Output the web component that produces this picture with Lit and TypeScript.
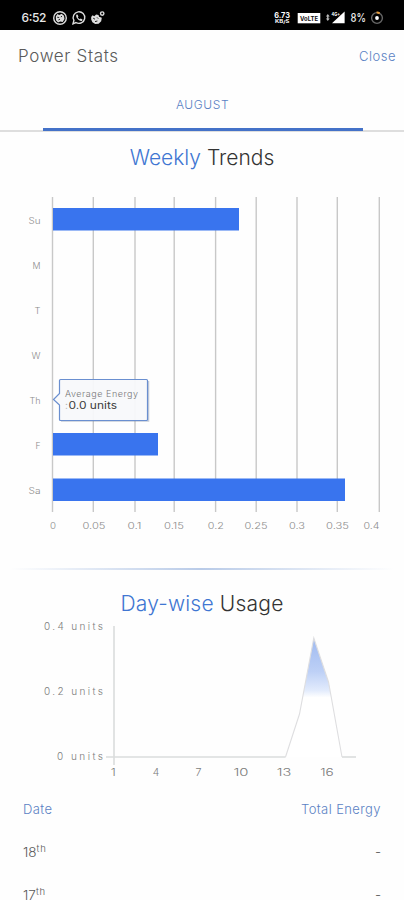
import { LitElement, html, svg, css } from "lit";
import { customElement } from "lit/decorators.js";

const GRID = [52.5, 93.3, 135, 174.2, 215.6, 256.2, 297, 337.3, 379.3];
const TICKS: [string, number, number][] = [
  ["0", 53, 6], ["0.05", 94, 23], ["0.1", 134.5, 14], ["0.15", 174, 20], ["0.2", 215.8, 16],
  ["0.25", 256, 23], ["0.3", 297, 16], ["0.35", 337.5, 23], ["0.4", 371.5, 16],
];
const DAYS: [string, number, number, number][] = [
  ["Su", 219.5, 186, 12], ["M", 264.5, 0, 8], ["T", 309.5, 0, 6], ["W", 354.5, 0, 9],
  ["Th", 399.5, 0, 11], ["F", 444.5, 105, 5], ["Sa", 490, 292, 12],
];

@customElement("status-bar")
class StatusBar extends LitElement {
  static styles = css`
    :host { display: block; height: 30px; background: #000; }
    svg { display: block; font-family: Inter, "Liberation Sans", sans-serif; fill: #fff; }
    .clock { font-size: 12px; font-weight: 500; fill: #e8e8e8; }
    .rate { font-size: 8px; font-weight: 700; }
    .unit { font-size: 4.5px; font-weight: 700; }
    .volte { font-size: 6.5px; font-weight: 700; fill: #111; }
    .net { font-size: 5px; font-weight: 700; }
  `;
  render() {
    return html`<svg width="404" height="30" viewBox="0 0 404 30">
      <text class="clock" x="21.5" y="22" textLength="25">6:52</text>
      <g fill="none" stroke="#ddd" stroke-width="1.4">
        <circle cx="60" cy="18" r="6.3" />
        <path d="M73 23.8l.9-3.4a5.8 5.8 0 1 1 2 2.1z" />
        <circle cx="102.2" cy="13.6" r="1.7" />
      </g>
      <path d="M55.8 16.5l1.6-2.4 1.8.9 2.4-1.2 2.4 2 .5 3.2-1.8 3-2.5-.4-2.2.8-2-2.2z" fill="#ddd" />
      <path d="M57.2 17.2l2 .3m1.6-.6l1.2-.6M58.4 20l1.6-.8" stroke="#222" fill="none" />
      <path d="M76.2 14.8l1.3-.3.9 2-.6.9c.5.9 1.1 1.4 2 1.8l.9-.8 1.8 1-.3 1.3c-2.5 1.3-6.6-2.7-6-5.9z" fill="#ddd" />
      <path d="M91.2 17l1.3-1.7 1.8 1 1.8-1.8 2.4.6.6 1.6 2.7 1.1-.6 3.4-2.6 2.6-3.4.3-2.8-1.8-1.2-2.8z" fill="#ddd" />
      <path d="M93.2 18.2l1.8 1m2-1.8l1.2 1.2M95 21.6l2.4-.6" stroke="#222" fill="none" />
      <text class="rate" x="274.3" y="17.6" textLength="15.7" lengthAdjust="spacingAndGlyphs">6.73</text>
      <text class="unit" x="275" y="22.8" textLength="14.5" lengthAdjust="spacingAndGlyphs">KB/S</text>
      <rect x="297.7" y="13" width="22.6" height="10.3" />
      <text class="volte" x="300" y="20.7" textLength="18" lengthAdjust="spacingAndGlyphs">VoLTE</text>
      <path d="M327.8 14l1.9 2.4h-1.2v2.2h1.2l-1.9 2.4-1.9-2.4h1.2v-2.2h-1.2z" fill="#bbb" />
      <text class="net" x="331.5" y="16" textLength="8.5" lengthAdjust="spacingAndGlyphs">4G+</text>
      <path d="M332 23.2L344.6 11.5V23.2z" />
      <text class="clock" x="350.5" y="22" textLength="15.5" lengthAdjust="spacingAndGlyphs">8%</text>
      <circle cx="377" cy="18" r="5.4" fill="none" stroke="#666" stroke-width="1.4" />
      <path d="M376.6 12.6a5.4 5.4 0 0 1 3.1.7" fill="none" stroke="#e59a3a" stroke-width="2" />
      <circle cx="377" cy="18" r="1.9" />
    </svg>`;
  }
}

@customElement("weekly-chart")
class WeeklyChart extends LitElement {
  static styles = css`
    :host { display: block; height: 370px; }
    svg { display: block; font-family: Inter, "Liberation Sans", sans-serif; }
    .grid { stroke: #c8c8c8; stroke-width: 1.4; }
    .bar { fill: #3974ee; }
    .label { font-size: 9px; font-weight: 300; fill: #8c8c8c; }
    .tip { fill: #f8f9fb; fill-opacity: .94; stroke: #6a8fd0; stroke-width: 1.2; }
    .shade { fill: none; stroke: #8290a8; stroke-opacity: .45; stroke-width: 1.3; }
    .name { font-size: 9px; font-weight: 300; fill: #777; }
    .value { font-size: 10px; font-weight: 400; fill: #3c3c3c; }
    .faint { fill: #b5b5b5; }
  `;
  render() {
    return html`<svg width="404" height="370" viewBox="0 180 404 370">
      ${GRID.map((x) => svg`<line class="grid" x1=${x} x2=${x} y1="197" y2="512" />`)}
      ${DAYS.map(([d, y, w, len]) => svg`
        <text class="label" x=${40.5 - len} y=${y + 4} textLength=${len} lengthAdjust="spacingAndGlyphs">${d}</text>
        ${w ? svg`<rect class="bar" x="53" y=${y - 11.5} width=${w} height="22.5" />` : null}`)}
      ${TICKS.map(([t, x, w]) => svg`<text class="label" x=${x - w / 2} y="529" textLength=${w} lengthAdjust="spacingAndGlyphs">${t}</text>`)}
      <path class="shade" d="M148.6 381V421.2H61" />
      <path class="tip" d="M60.5 379.5H146.5Q147.5 379.5 147.5 380.5V419.5Q147.5 420.5 146.5 420.5H60.5Q59.5 420.5 59.5 419.5V405L53.5 399.5L59.5 393.5V380.5Q59.5 379.5 60.5 379.5Z" />
      <text class="name" x="65" y="396.5" textLength="73">Average Energy</text>
      <text class="value faint" x="65" y="409.3">:</text>
      <text class="value" x="68.5" y="409.3" textLength="48.5" lengthAdjust="spacingAndGlyphs">0.0 units</text>
    </svg>`;
  }
}

@customElement("daily-chart")
class DailyChart extends LitElement {
  static styles = css`
    :host { display: block; height: 165px; }
    svg { display: block; font-family: Inter, "Liberation Sans", sans-serif; }
    .axis { stroke: #dadcdc; stroke-width: 1.6; }
    .label { font-size: 10px; font-weight: 300; fill: #7c7c7c; }
    .line { fill: none; stroke: #dedee0; stroke-width: 1.1; }
  `;
  render() {
    const ys: [string, number, number, number][] = [
      ["0.4 units", 629.5, 44, 59], ["0.2 units", 695, 44, 59], ["0 units", 760, 57, 46],
    ];
    const xs: [string, number, number][] = [
      ["1", 113.3, 5], ["4", 156, 6.5], ["7", 198.5, 6], ["10", 241, 15], ["13", 284, 14.5], ["16", 327, 13.5],
    ];
    return html`<svg width="404" height="165" viewBox="0 619 404 165">
      <defs><linearGradient id="fade" x1="0" y1="0" x2="0" y2="1">
        <stop offset="0" stop-color="#9fbaf0" /><stop offset=".28" stop-color="#bdd0f6" />
        <stop offset=".44" stop-color="#e2ebfc" /><stop offset=".5" stop-color="#fff" />
      </linearGradient></defs>
      <line class="axis" x1="114" x2="114" y1="626" y2="765" />
      <line class="axis" x1="106" x2="285.5" y1="757" y2="757" />
      <line class="axis" x1="342" x2="356" y1="757" y2="757" />
      <path fill="url(#fade)" d="M285.5 757L299.5 714L313.8 638L328.5 682L342 757Z" />
      <path class="line" d="M285.5 757L299.5 714L313.8 638L328.5 682L342 757" />
      ${ys.map(([t, y, x, w]) => svg`<text class="label" x=${x} y=${y} textLength=${w}>${t}</text>`)}
      ${xs.map(([t, x, w]) => svg`<text class="label" x=${x - w / 2} y="775.5" textLength=${w} lengthAdjust="spacingAndGlyphs">${t}</text>`)}
    </svg>`;
  }
}

@customElement("app-root")
class AppRoot extends LitElement {
  static styles = css`
    :host { display: block; height: 900px; overflow: hidden; background: #fefefe;
      font-family: Inter, "Liberation Sans", sans-serif; color: #5a5a5a; }
    .header { height: 52px; display: flex; align-items: center; justify-content: space-between;
      padding: 0 8px 0 18px; box-sizing: border-box; }
    .title { font-size: 17px; font-weight: 300; letter-spacing: .65px; }
    .close { font-size: 13px; font-weight: 300; letter-spacing: .5px; color: #5b82c4; }
    .tabs { height: 50px; display: flex; justify-content: center; box-sizing: border-box;
      padding-left: 1px; border-bottom: 2px solid #dedede; }
    .tab { width: 320px; height: 49px; box-sizing: border-box; border-bottom: 3px solid #4472c8;
      text-align: center; line-height: 46px; font-size: 12px; font-weight: 300;
      letter-spacing: .6px; color: #5b82c4; }
    .heading { margin: 0; height: 48px; line-height: 52px; text-align: center; font-size: 21px;
      font-weight: 300; letter-spacing: 0; color: #333; }
    .heading.day { height: 49px; line-height: 67px; letter-spacing: .2px; }
    .accent { color: #4076d2; }
    .rule { height: 2px; margin: 18px 10px 0; background: linear-gradient(90deg, transparent, #b9cbe8 50%, transparent); }
    .row { display: flex; justify-content: space-between; padding: 0 23px; height: 43px;
      line-height: 42px; font-size: 13.5px; font-weight: 300; }
    .row.head { height: 47px; line-height: 50px; font-size: 13px; letter-spacing: .4px; color: #5b82c4; }
    sup { font-size: 9.5px; line-height: 0; vertical-align: 5px; letter-spacing: .8px; }
  `;
  render() {
    return html`
      <status-bar></status-bar>
      <div class="header"><span class="title">Power Stats</span><span class="close">Close</span></div>
      <div class="tabs"><div class="tab">AUGUST</div></div>
      <h2 class="heading"><span class="accent">Weekly</span> Trends</h2>
      <weekly-chart></weekly-chart>
      <div class="rule"></div>
      <h2 class="heading day"><span class="accent">Day-wise</span> Usage</h2>
      <daily-chart></daily-chart>
      <div class="row head"><span>Date</span><span>Total Energy</span></div>
      ${["18", "17"].map((d) => html`<div class="row"><span>${d}<sup>th</sup></span><span>-</span></div>`)}
    `;
  }
}
